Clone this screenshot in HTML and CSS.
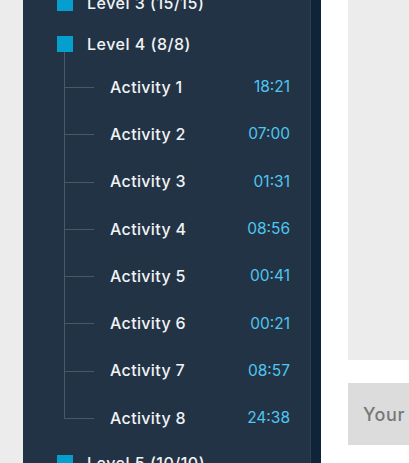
FILE: index.html
```html
<!DOCTYPE html>
<html>
<head>
<meta charset="utf-8">
<link rel="stylesheet" href="styles.css">
</head>
<body>
<div class="page">
  <div class="gutter"></div>
  <aside class="panel">
    <ul class="tree">
      <li class="level">
        <div class="level-row"><span class="square"></span><span class="level-name">Level 3 (15/15)</span></div>
        <div class="level-gap"></div>
      </li>
      <li class="level">
        <div class="level-row"><span class="square"></span><span class="level-name">Level 4 (8/8)</span></div>
        <div class="stem"></div>
        <ul class="activities">
          <li class="activity"><span class="conn"><span class="conn-top"></span><span class="conn-bot"></span></span><span class="act-name">Activity 1</span><span class="time">18:21</span></li>
          <li class="activity"><span class="conn"><span class="conn-top"></span><span class="conn-bot"></span></span><span class="act-name">Activity 2</span><span class="time">07:00</span></li>
          <li class="activity"><span class="conn"><span class="conn-top"></span><span class="conn-bot"></span></span><span class="act-name">Activity 3</span><span class="time">01:31</span></li>
          <li class="activity"><span class="conn"><span class="conn-top"></span><span class="conn-bot"></span></span><span class="act-name">Activity 4</span><span class="time">08:56</span></li>
          <li class="activity"><span class="conn"><span class="conn-top"></span><span class="conn-bot"></span></span><span class="act-name">Activity 5</span><span class="time">00:41</span></li>
          <li class="activity"><span class="conn"><span class="conn-top"></span><span class="conn-bot"></span></span><span class="act-name">Activity 6</span><span class="time">00:21</span></li>
          <li class="activity"><span class="conn"><span class="conn-top"></span><span class="conn-bot"></span></span><span class="act-name">Activity 7</span><span class="time">08:57</span></li>
          <li class="activity last"><span class="conn"><span class="conn-top"></span><span class="conn-bot"></span></span><span class="act-name">Activity 8</span><span class="time">24:38</span></li>
        </ul>
      </li>
      <li class="level">
        <div class="level-row"><span class="square"></span><span class="level-name">Level 5 (10/10)</span></div>
      </li>
    </ul>
  </aside>
  <div class="edge"></div>
  <div class="spacer"></div>
  <main class="content">
    <div class="card-top"></div>
    <div class="input-box"><span class="placeholder">Your notes</span></div>
  </main>
</div>
</body>
</html>
```

FILE: styles.css
```css
* { box-sizing: border-box; }
html, body { margin: 0; padding: 0; overflow: hidden; background: #ffffff; }
body { font-family: "Inter", "Liberation Sans", sans-serif; }

.page {
  display: flex;
  width: 409px;
  height: 463px;
  overflow: hidden;
}

.gutter { width: 23px; flex: none; background: #ececec; }

.panel {
  width: 288px;
  flex: none;
  background: #223345;
  border-right: 1px solid #2e3f52;
  padding: 0 20px 0 34px;
  overflow: hidden;
}

.edge { width: 10px; flex: none; background: #0f2339; }
.spacer { width: 27px; flex: none; background: #ffffff; }

.tree, .activities { list-style: none; margin: 0; padding: 0; }
.tree { margin-top: -18.5px; }

.level-row {
  display: flex;
  align-items: center;
  gap: 14px;
  height: 16px;
  margin-top: 13px;
}
.square { width: 16px; height: 16px; background: #049fcf; flex: none; }
.level-name {
  color: #f1f3f5;
  font-size: 16px;
  font-weight: 500;
  white-space: nowrap;
  letter-spacing: 0.5px;
}
.level-gap { height: 12px; }

.stem { margin-left: 7px; height: 12px; border-left: 1px solid #4b5867; }

.activities { margin-left: 7px; margin-bottom: 5px; }
.activity {
  display: flex;
  align-items: center;
  height: 47.3px;
}
.conn {
  display: flex;
  flex-direction: column;
  align-self: stretch;
  width: 30px;
  flex: none;
  margin-right: 16px;
}
.conn-top { height: 24.5px; border-left: 1px solid #4b5867; border-bottom: 1px solid #4b5867; }
.conn-bot { flex: 1; border-left: 1px solid #4b5867; }
.last .conn-bot { border-left-color: transparent; }

.act-name {
  flex: 1;
  color: #f1f3f5;
  font-size: 16px;
  font-weight: 500;
  letter-spacing: 0.35px;
  white-space: nowrap;
  margin-top: -1px;
}
.time {
  color: #4fc6f0;
  font-size: 15.5px;
  font-weight: 400;
  margin-top: -1px;
}

.content {
  flex: 1;
  min-width: 61px;
  display: flex;
  flex-direction: column;
}
.card-top { height: 360px; background: #ececec; flex: none; }
.input-box {
  margin-top: 23px;
  height: 62px;
  background: #dcdcdc;
  display: flex;
  align-items: center;
  padding-left: 15px;
  overflow: hidden;
}
.placeholder {
  color: #777777;
  font-size: 18px;
  font-weight: 500;
  white-space: nowrap;
  letter-spacing: 0.6px;
  word-spacing: 4px;
}
```
